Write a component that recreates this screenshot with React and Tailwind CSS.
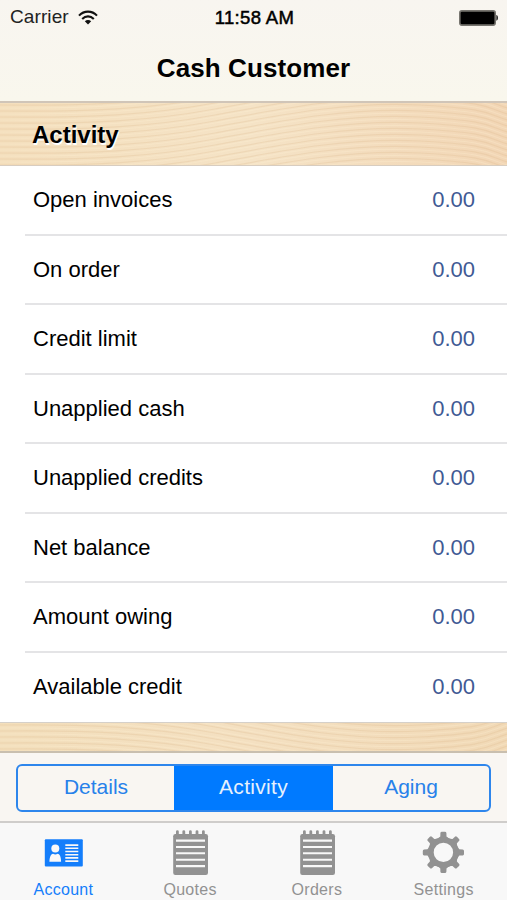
import { useState } from 'react'

const rows = [
  { label: 'Open invoices', value: '0.00' },
  { label: 'On order', value: '0.00' },
  { label: 'Credit limit', value: '0.00' },
  { label: 'Unapplied cash', value: '0.00' },
  { label: 'Unapplied credits', value: '0.00' },
  { label: 'Net balance', value: '0.00' },
  { label: 'Amount owing', value: '0.00' },
  { label: 'Available credit', value: '0.00' },
]

const segments = ['Details', 'Activity', 'Aging']

const tabs = [
  { label: 'Account', icon: CardIcon },
  { label: 'Quotes', icon: NotepadIcon },
  { label: 'Orders', icon: NotepadIcon },
  { label: 'Settings', icon: GearIcon },
]

function WifiIcon() {
  return (
    <svg width="20" height="15" viewBox="0 0 20 15" fill="none" stroke="#111" strokeWidth="2.1">
      <path d="M1 5.6 C6 .3 14 .3 19 5.6" />
      <path d="M4.2 8.9 C7.6 5.5 12.4 5.5 15.8 8.9" />
      <path d="M6.8 11.2 C8.6 9.5 11.4 9.5 13.2 11.2 L10 14.4 Z" fill="#111" stroke="none" />
    </svg>
  )
}

function BatteryIcon() {
  return (
    <svg width="40" height="16" viewBox="0 0 40 16">
      <rect x=".8" y=".9" width="35.4" height="14.2" rx="2" fill="#000" stroke="#77756f" strokeWidth="1.6" />
      <path d="M37.4 5 C39.4 5.4 39.4 10.3 37.4 10.7 Z" fill="#111" />
    </svg>
  )
}

function CardIcon() {
  return (
    <svg width="44" height="46" viewBox="0 0 44 46">
      <rect x="3.8" y="9.2" width="38" height="27.4" rx="1" fill="currentColor" />
      <circle cx="14.3" cy="18.4" r="4" fill="#f9f8f8" />
      <path d="M8.4 31.8 C8.6 26.5 10.2 23.8 12 23.8 Q14.3 25.2 16.6 23.8 C18.6 24 20 26.5 20.1 31.8 Z" fill="#f9f8f8" />
      <path d="M24.3 15.1H37.3M24.3 18.3H37.3M24.3 21.5H37.3M24.3 24.7H37.3M24.3 27.9H37.3M24.3 31.1H37.3" stroke="#f9f8f8" strokeWidth="1.6" />
    </svg>
  )
}

function NotepadIcon() {
  return (
    <svg width="44" height="46" viewBox="0 0 44 46">
      <rect x="5.2" y="4" width="34.8" height="41" rx="2.2" fill="currentColor" />
      <path d="M9.4 5V1.6M15.8 5V1.6M22.4 5V1.6M29 5V1.6M35.4 5V1.6" stroke="currentColor" strokeWidth="2.8" strokeLinecap="round" />
      <path d="M8 10.6H37M8 17H37M8 23.3H37M8 29.7H37M8 36.1H37" stroke="#f8f8f8" strokeWidth="2.1" />
    </svg>
  )
}

function GearIcon() {
  return (
    <svg width="44" height="46" viewBox="0 0 44 46">
      <g transform="translate(21.4 22.4)" fill="currentColor">
        <circle r="12.6" fill="none" stroke="currentColor" strokeWidth="5.8" />
        {[0, 45, 90, 135, 180, 225, 270, 315].map((angle) => (
          <path
            key={angle}
            transform={`rotate(${angle})`}
            d="M-5.4 -13.8 L-3.1 -16 L-3 -19.3 Q-2.9 -20.6 -1.5 -20.6 H1.5 Q2.9 -20.6 3 -19.3 L3.1 -16 L5.4 -13.8 Z"
          />
        ))}
      </g>
    </svg>
  )
}

// Wood grain behind the table
function Grain({ className }) {
  return (
    <svg className={className} viewBox="0 0 507 63" preserveAspectRatio="xMidYMin slice" fill="none">
      {[0, 1, 2, 3, 4, 5, 6, 7, 8, 9, 10, 11, 12, 13, 14, 15].map((i) => (
        <g key={i} transform={`translate(0 ${i * 6})`} strokeWidth="1.2">
          <path d="M0 2 C90 3 150 0 215 -12 S350 -38 420 -34 S485 -26 507 -19" stroke="#d8b485" strokeOpacity=".24" />
          <path d="M0 5 C90 6 150 2 215 -10 S350 -35 420 -31 S485 -23 507 -16" stroke="#fff2d8" strokeOpacity=".25" />
        </g>
      ))}
    </svg>
  )
}

export default function App() {
  const [segment, setSegment] = useState('Activity')
  const [tab, setTab] = useState('Account')

  return (
    <div className="flex h-[900px] w-[507px] flex-col overflow-hidden bg-white font-['Liberation_Sans',Arial,sans-serif] text-black">
      <header className="h-[103px] shrink-0 border-b-2 border-[#d0c5b8] bg-linear-to-b from-[#f8f5f0] to-[#f9f7ed]">
        <div className="grid h-[35px] grid-cols-3 items-center pr-[8px] pl-[10px]">
          <div className="flex items-center gap-[9px] text-[19px] tracking-[0.1px] text-[#222]">
            <span>Carrier</span>
            <WifiIcon />
          </div>
          <span className="text-center text-[18.5px] tracking-[0.35px] whitespace-nowrap [-webkit-text-stroke:0.5px_#000]">11:58 AM</span>
          <div className="flex justify-end">
            <BatteryIcon />
          </div>
        </div>
        <h1 className="pt-[13px] text-center text-[26px] leading-[40px] font-bold tracking-[0.1px]">Cash Customer</h1>
      </header>

      <div className="relative flex h-[63px] shrink-0 items-center border-b border-[#d8cdc0] bg-linear-to-r from-[#f4dfbd] via-[#f5e3c6] to-[#f2d6b5] pt-[2px] pl-[32px]">
        <Grain className="absolute inset-0 h-full w-full" />
        <h2 className="relative text-[24px] font-bold [text-shadow:1px_1.5px_0_#fff]">Activity</h2>
      </div>

      <ul className="flex h-[557px] shrink-0 flex-col border-b border-[#d5d0c9] bg-white">
        {rows.map((row) => (
          <li key={row.label} className="group flex-1 pl-[25px]">
            <div className="flex h-full items-center justify-between border-b-2 border-[#e4e4e6] pr-[32px] pl-[8px] text-[22px] group-last:border-transparent">
              <span>{row.label}</span>
              <span className="text-[#3f5a94]">{row.value}</span>
            </div>
          </li>
        ))}
      </ul>

      <div className="relative h-[30px] shrink-0 border-b-2 border-[#c9bfaf] bg-linear-to-r from-[#f3dfbc] via-[#f4e0c1] to-[#f1d9b6]">
        <Grain className="absolute inset-0 h-full w-full -scale-y-100" />
      </div>

      <div className="flex h-[70px] shrink-0 items-start border-b-2 border-[#cfcdcb] bg-[#f9f6f2] px-[16px] pt-[11px]">
        <div className="grid h-[48px] flex-1 grid-cols-[156px_159px_1fr] overflow-hidden rounded-[6px] border-2 border-[#2e86ec]">
          {segments.map((name) => (
            <button
              key={name}
              onClick={() => setSegment(name)}
              className={`pb-[2px] text-[21px] ${segment === name ? 'bg-[#007aff] tracking-[0.3px] text-[#e6f1fd]' : 'text-[#2781ea]'}`}
            >
              {name}
            </button>
          ))}
        </div>
      </div>

      <nav className="grid flex-1 grid-cols-4 bg-[#f8f8f8]">
        {tabs.map(({ label, icon: Icon }) => (
          <button
            key={label}
            onClick={() => setTab(label)}
            className={`flex flex-col items-center justify-start pt-[7px] text-[16px] leading-[20px] tracking-[0.3px] ${tab === label ? 'text-[#147efb]' : 'text-[#929292]'}`}
          >
            <Icon />
            <span className="mt-[4px]">{label}</span>
          </button>
        ))}
      </nav>
    </div>
  )
}
